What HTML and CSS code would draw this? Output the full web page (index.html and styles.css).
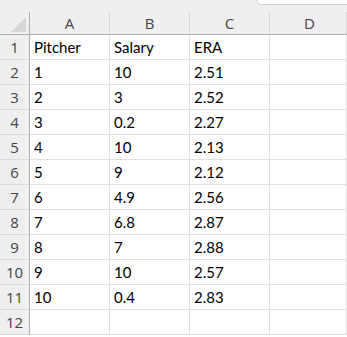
FILE: index.html
```html
<!DOCTYPE html>
<html>
<head>
<meta charset="utf-8">
<link rel="stylesheet" href="styles.css">
</head>
<body>
<div class="top">
  <div class="tab"></div>
</div>
<div class="sheet">
  <div class="hdr corner"><div class="tri"></div></div>
  <div class="hdr col">A</div>
  <div class="hdr col">B</div>
  <div class="hdr col">C</div>
  <div class="hdr col last">D</div>

  <div class="rh">1</div><div class="c">Pitcher</div><div class="c">Salary</div><div class="c">ERA</div><div class="c"></div>
  <div class="rh">2</div><div class="c">1</div><div class="c">10</div><div class="c">2.51</div><div class="c"></div>
  <div class="rh">3</div><div class="c">2</div><div class="c">3</div><div class="c">2.52</div><div class="c"></div>
  <div class="rh">4</div><div class="c">3</div><div class="c">0.2</div><div class="c">2.27</div><div class="c"></div>
  <div class="rh">5</div><div class="c">4</div><div class="c">10</div><div class="c">2.13</div><div class="c"></div>
  <div class="rh">6</div><div class="c">5</div><div class="c">9</div><div class="c">2.12</div><div class="c"></div>
  <div class="rh">7</div><div class="c">6</div><div class="c">4.9</div><div class="c">2.56</div><div class="c"></div>
  <div class="rh">8</div><div class="c">7</div><div class="c">6.8</div><div class="c">2.87</div><div class="c"></div>
  <div class="rh">9</div><div class="c">8</div><div class="c">7</div><div class="c">2.88</div><div class="c"></div>
  <div class="rh">10</div><div class="c">9</div><div class="c">10</div><div class="c">2.57</div><div class="c"></div>
  <div class="rh">11</div><div class="c">10</div><div class="c">0.4</div><div class="c">2.83</div><div class="c"></div>
  <div class="rh">12</div><div class="c"></div><div class="c"></div><div class="c"></div><div class="c"></div>
</div>
</body>
</html>
```

FILE: styles.css
```css
html, body {
  margin: 0;
  padding: 0;
  background: #ffffff;
  overflow: hidden;
}
body {
  width: 347px;
  height: 337px;
}
.top {
  height: 12px;
  background: #efefef;
  position: relative;
  overflow: hidden;
}
.tab {
  position: absolute;
  left: 256px;
  top: -6px;
  width: 100px;
  height: 9px;
  background: #ffffff;
  border: 1px solid #d4d4d4;
  border-radius: 6px;
}
.sheet {
  display: grid;
  grid-template-columns: 30px 80px 80px 80px 77px;
  grid-template-rows: 23px repeat(12, 25px);
  width: 347px;
}
.hdr {
  background: #efefef;
  box-sizing: border-box;
  border-bottom: 1px solid #aeaeae;
  font-family: "Open Sans", "Noto Sans", sans-serif;
  font-size: 15px;
  color: #444444;
  display: flex;
  align-items: center;
  justify-content: center;
}
.col {
  border-right: 1px solid #d9d9d9;
}
.hdr.last {
  padding-left: 3px;
}
.corner {
  border-right: 1px solid #aeaeae;
  position: relative;
}
.tri {
  position: absolute;
  right: 3px;
  bottom: 2px;
  width: 0;
  height: 0;
  border-left: 15px solid transparent;
  border-bottom: 15px solid #d6d6d6;
}
.rh {
  background: #efefef;
  box-sizing: border-box;
  border-right: 1px solid #aeaeae;
  border-bottom: 1px solid #dadada;
  font-family: "Open Sans", "Noto Sans", sans-serif;
  font-size: 15px;
  color: #444444;
  display: flex;
  align-items: center;
  justify-content: center;
}
.c {
  box-sizing: border-box;
  border-right: 1px solid #e1e1e1;
  border-bottom: 1px solid #e1e1e1;
  font-family: "Lato", "Liberation Sans", sans-serif;
  font-size: 15px;
  color: #000000;
  display: flex;
  align-items: center;
  padding-left: 4px;
}
```
